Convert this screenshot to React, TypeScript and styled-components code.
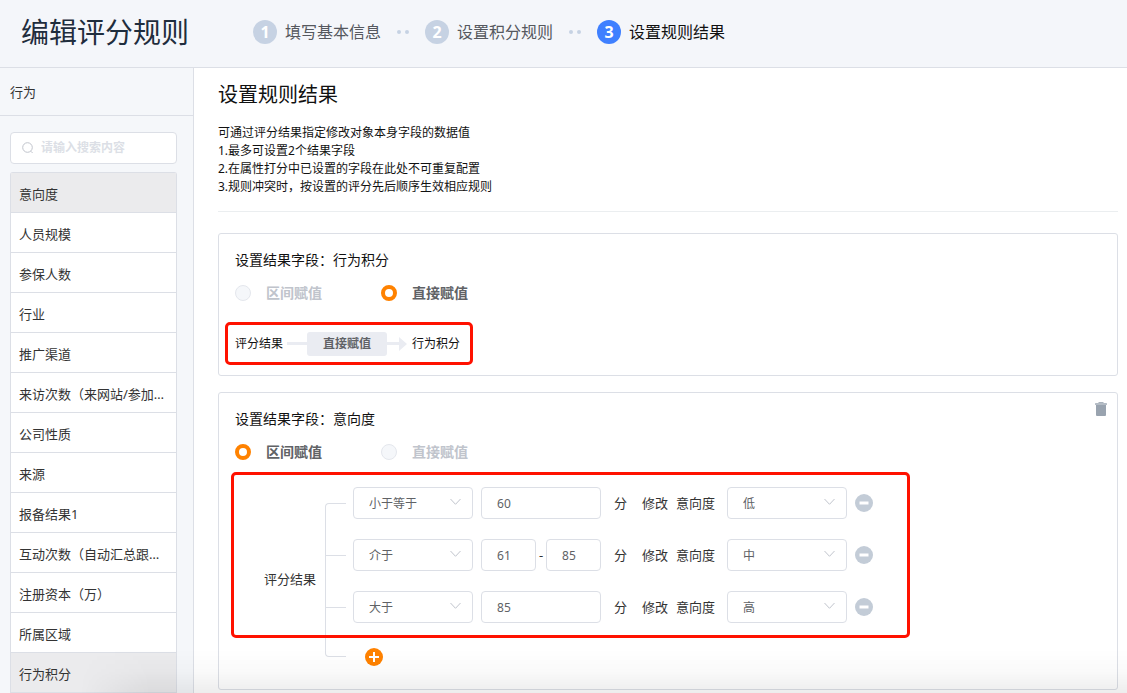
import React from 'react';
import styled, { createGlobalStyle, css } from 'styled-components';

const GlobalStyle = createGlobalStyle`
  *, *::before, *::after { box-sizing: border-box; }
  body { margin: 0; background: #fff; }
  body, button, input, select {
    font-family: "Noto Sans", "Noto Sans CJK SC", sans-serif;
  }
  button { padding: 0; border: 0; background: none; cursor: pointer; }
  h1, h2, h3, p, ul, ol, fieldset { margin: 0; padding: 0; }
  ul, ol { list-style: none; }
`;

const Page = styled.div`
  position: relative;
  display: flex;
  flex-direction: column;
  min-height: 100vh;
`;

const Header = styled.header`
  display: flex;
  align-items: center;
  gap: 64px;
  height: 68px;
  padding: 0 21px 4px;
  background: #f4f6fa;
  border-bottom: 1px solid #dcdfe6;
`;

const PageTitle = styled.h1`
  font-size: 28px;
  line-height: 40px;
  font-weight: 400;
  color: #1f2d3d;
  white-space: nowrap;
`;

const Steps = styled.ol`
  display: flex;
  align-items: center;
  gap: 16px;
`;

const Step = styled.li<{ $active?: boolean }>`
  display: flex;
  align-items: center;
  gap: 8px;
  font-size: 16px;
  line-height: 24px;
  white-space: nowrap;
  color: ${(p) => (p.$active ? '#111' : '#55585e')};
`;

const StepNumber = styled.span<{ $active?: boolean }>`
  display: grid;
  place-items: center;
  width: 24px;
  height: 24px;
  border-radius: 50%;
  font-weight: 700;
  color: #fff;
  background: ${(p) => (p.$active ? '#3f80ff' : '#c6d2e3')};
`;

const StepDots = styled.li`
  display: flex;
  gap: 4px;
  &::before, &::after {
    content: '';
    width: 4px;
    height: 4px;
    border-radius: 50%;
    background: #c6d2e3;
  }
`;

const Body = styled.div`
  display: flex;
  flex: 1;
`;

const Sidebar = styled.aside`
  flex: 0 0 194px;
  min-width: 0;
  background: #f5f7fa;
  border-right: 1px solid #dcdfe6;
`;

const SidebarTitle = styled.h2`
  height: 48px;
  padding-left: 10px;
  border-bottom: 1px solid #dcdfe6;
  font-size: 13px;
  line-height: 48px;
  font-weight: 400;
  color: #333;
`;

const Search = styled.label`
  display: flex;
  align-items: center;
  gap: 8px;
  height: 32px;
  margin: 16px 16px 8px 10px;
  padding: 0 11px;
  background: #fff;
  border: 1px solid #dcdfe6;
  border-radius: 4px;
`;

const SearchInput = styled.input`
  flex: 1;
  min-width: 0;
  padding: 0;
  border: 0;
  outline: 0;
  background: none;
  font-size: 12px;
  line-height: 20px;
  color: #606266;
  &::placeholder { color: #dcdfe6; font-weight: 700; opacity: 1; }
`;

const FieldList = styled.ul`
  margin: 0 16px 0 10px;
  border: 1px solid #dcdfe6;
  border-bottom: 0;
  border-radius: 3px 3px 0 0;
`;

const Field = styled.li<{ $selected?: boolean }>`
  height: 40px;
  padding: 0 8px;
  border-bottom: 1px solid #dcdfe6;
  background: ${(p) => (p.$selected ? '#ebebed' : '#fff')};
  font-size: 13px;
  line-height: 42px;
  color: #333;
  overflow: hidden;
  text-overflow: ellipsis;
  white-space: nowrap;
`;

const Main = styled.main`
  flex: 1;
  min-width: 0;
  padding: 13px 9px 3px 24px;
`;

const MainTitle = styled.h2`
  font-size: 20px;
  line-height: 28px;
  font-weight: 400;
  color: #111;
`;

const Notes = styled.div`
  margin-top: 15px;
  padding-bottom: 15px;
  border-bottom: 1px solid #ebeef0;
  font-size: 12px;
  line-height: 18px;
  color: #111;
`;

const Card = styled.section`
  margin-top: 16px;
  padding-top: 16px;
  border: 1px solid #dcdfe6;
  border-radius: 3px;
  background: #fff;
`;

const Cards = styled.div`
  padding-top: 5px;
`;

const CardHead = styled.div`
  position: relative;
  padding: 0 16px;
`;

const CardTitle = styled.h3`
  font-size: 14px;
  line-height: 20px;
  font-weight: 400;
  color: #111;
`;

const DeleteButton = styled.button`
  position: absolute;
  top: -7px;
  right: 10px;
  display: flex;
`;

const RadioGroup = styled.fieldset`
  display: flex;
  gap: 59px;
  margin: 13px 16px 0;
  border: 0;
`;

const Radio = styled.label<{ $muted?: boolean }>`
  display: flex;
  align-items: center;
  gap: 15px;
  font-size: 14px;
  line-height: 20px;
  font-weight: 700;
  color: ${(p) => (p.$muted ? '#c0c4cc' : '#606266')};
`;

const RadioInput = styled.input`
  appearance: none;
  width: 16px;
  height: 16px;
  margin: 0;
  border: 1px solid #e4e7ed;
  border-radius: 50%;
  background: #f5f7fa;
  &:checked { border: 4px solid #ff8200; background: #fff; }
`;

const redFrame = css`
  border: 3px solid #ff1100;
  border-radius: 5px;
`;

const DirectFlow = styled.div`
  ${redFrame}
  display: flex;
  align-items: center;
  width: fit-content;
  height: 43px;
  margin: 19px 6px 10px;
  padding: 0 10px 0 7px;
  font-size: 12px;
  line-height: 18px;
  color: #111;
`;

const FlowLine = styled.span<{ $arrow?: boolean }>`
  width: ${(p) => (p.$arrow ? '12px' : '20px')};
  height: 3px;
  margin-left: ${(p) => (p.$arrow ? '0' : '4px')};
  background: #eaecf2;
`;

const ArrowHead = styled.span`
  margin-right: 5px;
  border: solid transparent;
  border-width: 7px 0 7px 8px;
  border-left-color: #eaecf2;
`;

const FlowNode = styled.span`
  width: 80px;
  border-radius: 3px;
  background: #eaecf2;
  line-height: 24px;
  font-weight: 700;
  text-align: center;
  color: #606266;
`;

const Ranges = styled.div`
  position: relative;
  display: flex;
  margin: 10px 0 18px 12px;
  padding: 15px 0 0 33px;
`;

const RangeFrame = styled.div`
  ${redFrame}
  position: absolute;
  top: 0;
  left: 0;
  width: 679px;
  height: 166px;
  pointer-events: none;
`;

const RangeLabel = styled.div`
  align-self: center;
  margin-right: 9px;
  font-size: 13px;
  line-height: 20px;
  color: #333;
`;

const Bracket = styled.div`
  width: 21px;
  margin: 16px 7px 14px 0;
  border: 1px solid #dcdfe6;
  border-right: 0;
  border-radius: 4px 0 0 4px;
`;

const Tick = styled.div`
  height: 52px;
  border-bottom: 1px solid #dcdfe6;
`;

const RangeRows = styled.ul`
  display: flex;
  flex-direction: column;
  gap: 20px;
`;

const RangeRow = styled.li`
  display: flex;
  align-items: center;
  height: 32px;
  font-size: 13px;
  line-height: 20px;
  color: #333;
  white-space: nowrap;
`;

const AddRow = styled.div`
  display: flex;
  align-items: center;
  height: 28px;
  margin-top: 20px;
  padding-left: 12px;
`;

const boxed = css`
  height: 32px;
  border: 1px solid #dcdfe6;
  border-radius: 4px;
  background: #fff;
  font-size: 12px;
  color: #606266;
  outline: 0;
`;

const SelectBox = styled.span`
  position: relative;
  display: flex;
  width: 120px;
  svg { position: absolute; top: 11px; right: 12px; pointer-events: none; }
`;

const NativeSelect = styled.select`
  ${boxed}
  appearance: none;
  width: 100%;
  padding: 0 30px 0 15px;
`;

const Values = styled.span`
  display: flex;
  align-items: center;
  width: 120px;
  margin: 0 13px 0 8px;
`;

const ValueInput = styled.input`
  ${boxed}
  flex: 1;
  min-width: 0;
  padding: 0 15px;
`;

const Dash = styled.span`
  width: 10px;
  text-align: center;
`;

const Unit = styled.span`
  margin-right: 15px;
`;

const Action = styled.span`
  margin-right: 8px;
`;

const Target = styled.span`
  margin-right: 12px;
`;

const RoundButton = styled.button<{ $primary?: boolean }>`
  display: grid;
  place-items: center;
  width: 18px;
  height: 18px;
  margin-left: ${(p) => (p.$primary ? '0' : '8px')};
  border-radius: 50%;
  background: ${(p) => (p.$primary ? '#ff8200' : '#c3ccd7')};
`;

const BottomShade = styled.div`
  position: fixed;
  inset: auto 0 0 0;
  height: 44px;
  background: linear-gradient(rgba(0, 0, 0, 0), rgba(0, 0, 0, 0.02) 50%, rgba(0, 0, 0, 0.07));
  mask-image: linear-gradient(to right, transparent 80px, #000 150px);
  pointer-events: none;
`;

const SearchIcon = () => (
  <svg width="11" height="12" viewBox="0 0 11 12" fill="none" stroke="#c0c4cc">
    <circle cx="5.5" cy="5.5" r="4.8" />
    <path d="M8.8 9.2 10.6 11" />
  </svg>
);

const Chevron = () => (
  <svg width="11" height="8" viewBox="0 0 11 8" fill="none" stroke="#c0c4cc">
    <path d="M.5 1 5.5 6.3 10.5 1" />
  </svg>
);

const TrashIcon = () => (
  <svg width="12" height="14" viewBox="0 0 12 14">
    <rect x="3.5" y="0" width="5" height="2" fill="#a9b2bc" />
    <rect x="0" y="1" width="12" height="2" rx="0.5" fill="#b4bcc5" />
    <path d="M1 3h10V13a1 1 0 0 1-1 1H2a1 1 0 0 1-1-1z" fill="#99a3af" />
  </svg>
);

const SignIcon = ({ plus }: { plus?: boolean }) => (
  <svg width="10" height="10" viewBox="0 0 10 10" stroke="#fff" strokeWidth={plus ? 2 : 3}>
    <path d={plus ? 'M0 5h10M5 0v10' : 'M.5 5h9'} />
  </svg>
);

const steps = ['填写基本信息', '设置积分规则', '设置规则结果'];

const fields = [
  '意向度', '人员规模', '参保人数', '行业', '推广渠道', '来访次数（来网站/参加活动）',
  '公司性质', '来源', '报备结果1', '互动次数（自动汇总跟进记录）', '注册资本（万）', '所属区域', '行为积分',
];
const selectedFields = ['意向度', '行为积分'];

const ranges = [
  { op: '小于等于', values: ['60'], level: '低' },
  { op: '介于', values: ['61', '85'], level: '中' },
  { op: '大于', values: ['85'], level: '高' },
];

const modes = ['区间赋值', '直接赋值'];

function ModeRadios({ name, selected }: { name: string; selected: string }) {
  return (
    <RadioGroup>
      {modes.map((mode) => (
        <Radio key={mode} $muted={mode !== selected}>
          <RadioInput type="radio" name={name} defaultChecked={mode === selected} disabled={mode !== selected} />
          {mode}
        </Radio>
      ))}
    </RadioGroup>
  );
}

function Select({ label, value, options }: { label: string; value: string; options: string[] }) {
  return (
    <SelectBox>
      <NativeSelect aria-label={label} defaultValue={value}>
        {options.map((o) => <option key={o}>{o}</option>)}
      </NativeSelect>
      <Chevron />
    </SelectBox>
  );
}

export default function App() {
  return (
    <Page>
      <GlobalStyle />
      <Header>
        <PageTitle>编辑评分规则</PageTitle>
        <Steps>
          {steps.map((label, i) => (
            <React.Fragment key={label}>
              {i > 0 && <StepDots aria-hidden="true" />}
              <Step $active={i === 2}>
                <StepNumber $active={i === 2}>{i + 1}</StepNumber>
                {label}
              </Step>
            </React.Fragment>
          ))}
        </Steps>
      </Header>
      <Body>
        <Sidebar>
          <SidebarTitle>行为</SidebarTitle>
          <Search>
            <SearchIcon />
            <SearchInput type="text" aria-label="搜索" placeholder="请输入搜索内容" />
          </Search>
          <FieldList>
            {fields.map((f) => (
              <Field key={f} $selected={selectedFields.includes(f)}>{f}</Field>
            ))}
          </FieldList>
        </Sidebar>
        <Main>
          <MainTitle>设置规则结果</MainTitle>
          <Notes>
            <p>可通过评分结果指定修改对象本身字段的数据值</p>
            <p>1.最多可设置2个结果字段</p>
            <p>2.在属性打分中已设置的字段在此处不可重复配置</p>
            <p>3.规则冲突时，按设置的评分先后顺序生效相应规则</p>
          </Notes>
          <Cards>
            <Card>
              <CardHead>
                <CardTitle>设置结果字段：行为积分</CardTitle>
              </CardHead>
              <ModeRadios name="score-mode" selected="直接赋值" />
              <DirectFlow>
                <span>评分结果</span>
                <FlowLine />
                <FlowNode>直接赋值</FlowNode>
                <FlowLine $arrow />
                <ArrowHead />
                <span>行为积分</span>
              </DirectFlow>
            </Card>
            <Card>
              <CardHead>
                <CardTitle>设置结果字段：意向度</CardTitle>
                <DeleteButton type="button" aria-label="删除"><TrashIcon /></DeleteButton>
              </CardHead>
              <ModeRadios name="intent-mode" selected="区间赋值" />
              <Ranges>
                <RangeLabel>评分结果</RangeLabel>
                <Bracket>
                  <Tick />
                  <Tick />
                </Bracket>
                <div>
                  <RangeRows>
                    {ranges.map((r) => (
                      <RangeRow key={r.op}>
                        <Select label="条件" value={r.op} options={ranges.map((x) => x.op)} />
                        <Values>
                          {r.values.map((v, i) => (
                            <React.Fragment key={v}>
                              {i > 0 && <Dash>-</Dash>}
                              <ValueInput type="text" aria-label="分值" defaultValue={v} />
                            </React.Fragment>
                          ))}
                        </Values>
                        <Unit>分</Unit>
                        <Action>修改</Action>
                        <Target>意向度</Target>
                        <Select label="意向度" value={r.level} options={ranges.map((x) => x.level)} />
                        <RoundButton type="button" aria-label="移除"><SignIcon /></RoundButton>
                      </RangeRow>
                    ))}
                  </RangeRows>
                  <AddRow>
                    <RoundButton type="button" $primary aria-label="添加"><SignIcon plus /></RoundButton>
                  </AddRow>
                </div>
                <RangeFrame />
              </Ranges>
            </Card>
          </Cards>
        </Main>
      </Body>
      <BottomShade />
    </Page>
  );
}
